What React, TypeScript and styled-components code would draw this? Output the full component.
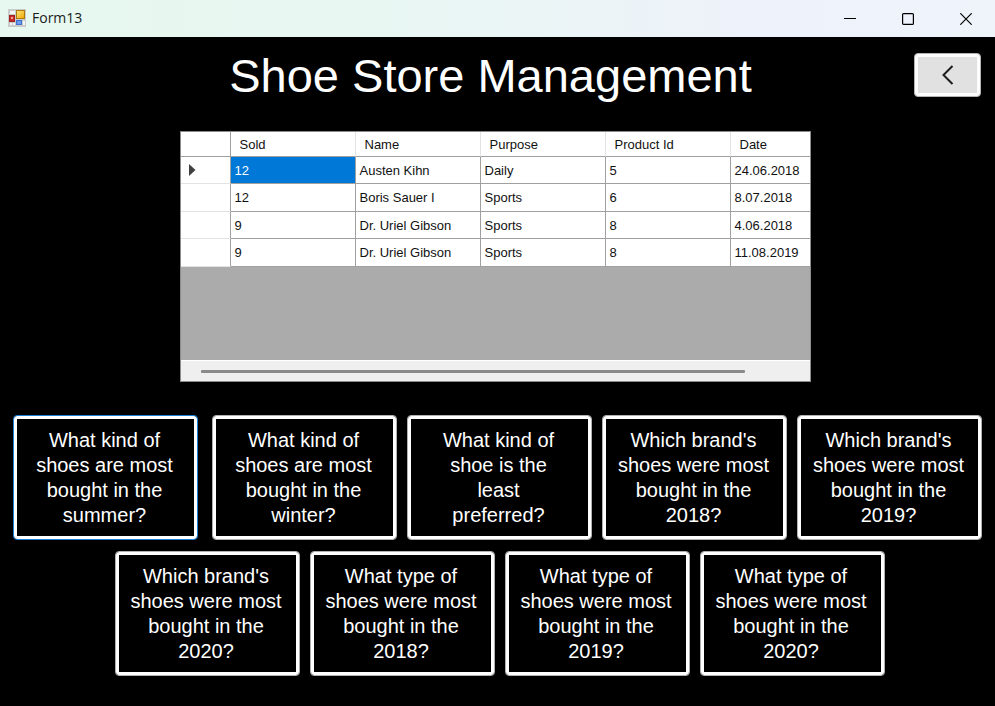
import React from "react";
import styled, { createGlobalStyle } from "styled-components";

const GlobalStyle = createGlobalStyle`
  * { box-sizing: border-box; }
  body { margin: 0; background: #000; font-family: "Liberation Sans", Arial, sans-serif; }
  button { font-family: inherit; cursor: pointer; }
`;

const Window = styled.div`
  display: flex;
  flex-direction: column;
  min-height: 100vh;
  background: #000;
`;

const TitleBar = styled.header`
  display: flex;
  align-items: center;
  height: 37px;
  padding-left: 8px;
  background: linear-gradient(90deg, #e6f8ef 0%, #e8f7f2 35%, #eef2fa 75%, #eff4fb 100%);
`;

const WindowName = styled.span`
  flex: 1;
  margin-left: 6px;
  font: 14px/20px "Open Sans", "Segoe UI", sans-serif;
  color: #1b1b1b;
`;

const CaptionButton = styled.button`
  display: grid;
  place-items: center;
  width: 58px;
  height: 36px;
  padding: 0;
  border: 0;
  background: transparent;
`;

const TitleContents = styled.div`
  display: flex;
  flex: 1;
  align-items: center;
  padding-bottom: 2px;
`;

const Heading = styled.div`
  display: grid;
  grid-template-columns: 1fr auto 1fr;
  align-items: center;
  height: 76px;
  padding-right: 14px;
`;

const Title = styled.h1`
  grid-column: 2;
  margin: 0;
  padding-top: 2px;
  font-size: 47px;
  font-weight: 400;
  line-height: 56px;
  color: #fff;
`;

const BackButton = styled.button`
  display: grid;
  place-items: center;
  justify-self: end;
  width: 67px;
  height: 44px;
  padding: 0;
  border: 1px solid #b4b4b4;
  border-radius: 4px;
  background: #e1e1e1;
  box-shadow: inset 0 0 0 3px #fdfdfd;
`;

const GridArea = styled.div`
  display: flex;
  justify-content: center;
  padding: 18px 5px 0 0;
`;

const GridPanel = styled.section`
  display: flex;
  flex-direction: column;
  width: 631px;
  max-width: 100%;
  height: 251px;
  border: 1px solid #8c8c8c;
  background: #ababab;
`;

const GridBody = styled.div`
  flex: 1;
  overflow: hidden;
`;

const Table = styled.table`
  width: 675px;
  table-layout: fixed;
  border-collapse: separate;
  border-spacing: 0;
  background: #fff;
  font-size: 13px;
  line-height: 16px;
  color: #111;
`;

const MarkerCol = styled.col`
  width: 50px;
`;

const HeadCell = styled.th`
  height: 25px;
  padding: 1px 9px 0;
  border-right: 1px solid #e3e3e3;
  border-bottom: 1px solid #a0a0a0;
  font-weight: 400;
  text-align: left;

  &:first-child { border-right-color: #a0a0a0; }
`;

const Row = styled.tr`
  height: 27px;
  &:nth-child(even) { height: 28px; }
`;

const MarkerCell = styled.th`
  padding: 0 0 0 7px;
  border-right: 1px solid #a0a0a0;
  border-bottom: 1px solid #e3e3e3;
  line-height: 0;
  text-align: left;
`;

const Cell = styled.td<{ $selected?: boolean }>`
  padding: 1px 4px 0;
  border-right: 1px solid #a0a0a0;
  border-bottom: 1px solid #a0a0a0;
  background: ${(p) => (p.$selected ? "#0078d7" : "#fff")};
  color: ${(p) => (p.$selected ? "#fff" : "#111")};
  white-space: nowrap;
`;

const ScrollBar = styled.div`
  display: flex;
  align-items: center;
  height: 21px;
  padding: 0 65px 0 20px;
  border-top: 1px solid #fff;
  background: #efefef;
`;

const ScrollThumb = styled.div`
  flex: 1;
  height: 3px;
  border-radius: 1px;
  background: #8a8a8a;
`;

const Questions = styled.main`
  display: flex;
  flex-direction: column;
  gap: 11px;
  margin-top: 33px;
  padding-bottom: 29px;
`;

const QuestionRow = styled.div<{ $indent?: boolean }>`
  display: flex;
  justify-content: center;
  gap: 14px;
  padding-left: ${(p) => (p.$indent ? "4px" : "0")};
`;

const QuestionGroup = styled.div`
  display: flex;
  gap: 10px;
`;

const QuestionButton = styled.button<{ $active?: boolean }>`
  width: 185px;
  height: 125px;
  padding: 0 2px 0 0;
  border: 1px solid ${(p) => (p.$active ? "#1a7fd4" : "#b4b0b0")};
  border-radius: 4px;
  background: #000;
  box-shadow: inset 0 0 0 3px #fff;
  font-size: 20px;
  line-height: 25px;
  color: #fff;
  text-align: center;
  white-space: pre-line;
`;

const columns = ["Sold", "Name", "Purpose", "Product Id", "Date"];

const rows = [
  ["12", "Austen Kihn", "Daily", "5", "24.06.2018"],
  ["12", "Boris Sauer I", "Sports", "6", "8.07.2018"],
  ["9", "Dr. Uriel Gibson", "Sports", "8", "4.06.2018"],
  ["9", "Dr. Uriel Gibson", "Sports", "8", "11.08.2019"],
];

const firstQuestion = "What kind of\nshoes are most\nbought in the\nsummer?";

const topQuestions = [
  "What kind of\nshoes are most\nbought in the\nwinter?",
  "What kind of\nshoe is the\nleast\npreferred?",
  "Which brand's\nshoes were most\nbought in the\n2018?",
  "Which brand's\nshoes were most\nbought in the\n2019?",
];

const bottomQuestions = [
  "Which brand's\nshoes were most\nbought in the\n2020?",
  "What type of\nshoes were most\nbought in the\n2018?",
  "What type of\nshoes were most\nbought in the\n2019?",
  "What type of\nshoes were most\nbought in the\n2020?",
];

const FormIcon = () => (
  <svg width="18" height="18" viewBox="0 0 18 18" aria-hidden="true">
    <defs>
      <linearGradient id="gold" x1="0" y1="0" x2="1" y2="1">
        <stop offset="0" stopColor="#ffe680" />
        <stop offset="1" stopColor="#eda600" />
      </linearGradient>
    </defs>
    <rect width="18" height="18" fill="#c9cccb" />
    <rect x="2" y="2" width="5" height="3" fill="#f4f6f6" />
    <rect x="2" y="14" width="2" height="2" fill="#f4f6f6" />
    <rect x="5" y="14" width="2" height="2" fill="#f4f6f6" />
    <rect x="15" y="12" width="2" height="4" fill="#f4f6f6" />
    <rect x="8.5" y="1.5" width="8" height="8" fill="url(#gold)" stroke="#b07a08" />
    <rect x="1.5" y="6.5" width="5" height="6" fill="#c92a22" stroke="#9c2420" />
    <rect x="3" y="8" width="2" height="2" fill="#f3a29b" />
    <rect x="8.5" y="11.5" width="5" height="4" fill="#6c9cf0" stroke="#3f6fd0" />
  </svg>
);

export default function App() {
  return (
    <Window>
      <GlobalStyle />
      <TitleBar>
        <TitleContents>
          <FormIcon />
          <WindowName>Form13</WindowName>
        </TitleContents>
        <CaptionButton aria-label="Minimize">
          <svg width="12" height="12" viewBox="0 0 12 12"><path d="M0 5.5H12" stroke="#000" /></svg>
        </CaptionButton>
        <CaptionButton aria-label="Maximize">
          <svg width="12" height="12" viewBox="0 0 12 12">
            <rect x=".6" y=".6" width="10.8" height="10.8" rx="1" fill="none" stroke="#000" strokeWidth="1.2" />
          </svg>
        </CaptionButton>
        <CaptionButton aria-label="Close">
          <svg width="12" height="12" viewBox="0 0 12 12"><path d="M.3.3 11.7 11.7M11.7.3.3 11.7" stroke="#000" strokeWidth="1.2" /></svg>
        </CaptionButton>
      </TitleBar>
      <Heading>
        <Title>Shoe Store Management</Title>
        <BackButton aria-label="Back">
          <svg width="12" height="20" viewBox="0 0 12 20">
            <path d="M10.5 1 1.5 10l9 9" fill="none" stroke="#1c1c1c" strokeWidth="2" />
          </svg>
        </BackButton>
      </Heading>
      <GridArea>
        <GridPanel>
          <GridBody>
            <Table>
              <colgroup>
                <MarkerCol />
                {columns.map((c) => <col key={c} />)}
              </colgroup>
              <thead>
                <tr>
                  <HeadCell />
                  {columns.map((c) => <HeadCell key={c} scope="col">{c}</HeadCell>)}
                </tr>
              </thead>
              <tbody>
                {rows.map((row, r) => (
                  <Row key={r}>
                    <MarkerCell>
                      {r === 0 && (
                        <svg width="8" height="12" viewBox="0 0 8 12"><path d="M1 0 7.5 6 1 12Z" fill="#404040" /></svg>
                      )}
                    </MarkerCell>
                    {row.map((value, c) => (
                      <Cell key={c} $selected={r === 0 && c === 0}>{value}</Cell>
                    ))}
                  </Row>
                ))}
              </tbody>
            </Table>
          </GridBody>
          <ScrollBar><ScrollThumb /></ScrollBar>
        </GridPanel>
      </GridArea>
      <Questions>
        <QuestionRow>
          <QuestionButton $active>{firstQuestion}</QuestionButton>
          <QuestionGroup>
            {topQuestions.map((q) => <QuestionButton key={q}>{q}</QuestionButton>)}
          </QuestionGroup>
        </QuestionRow>
        <QuestionRow $indent>
          <QuestionGroup>
            {bottomQuestions.map((q) => <QuestionButton key={q}>{q}</QuestionButton>)}
          </QuestionGroup>
        </QuestionRow>
      </Questions>
    </Window>
  );
}
